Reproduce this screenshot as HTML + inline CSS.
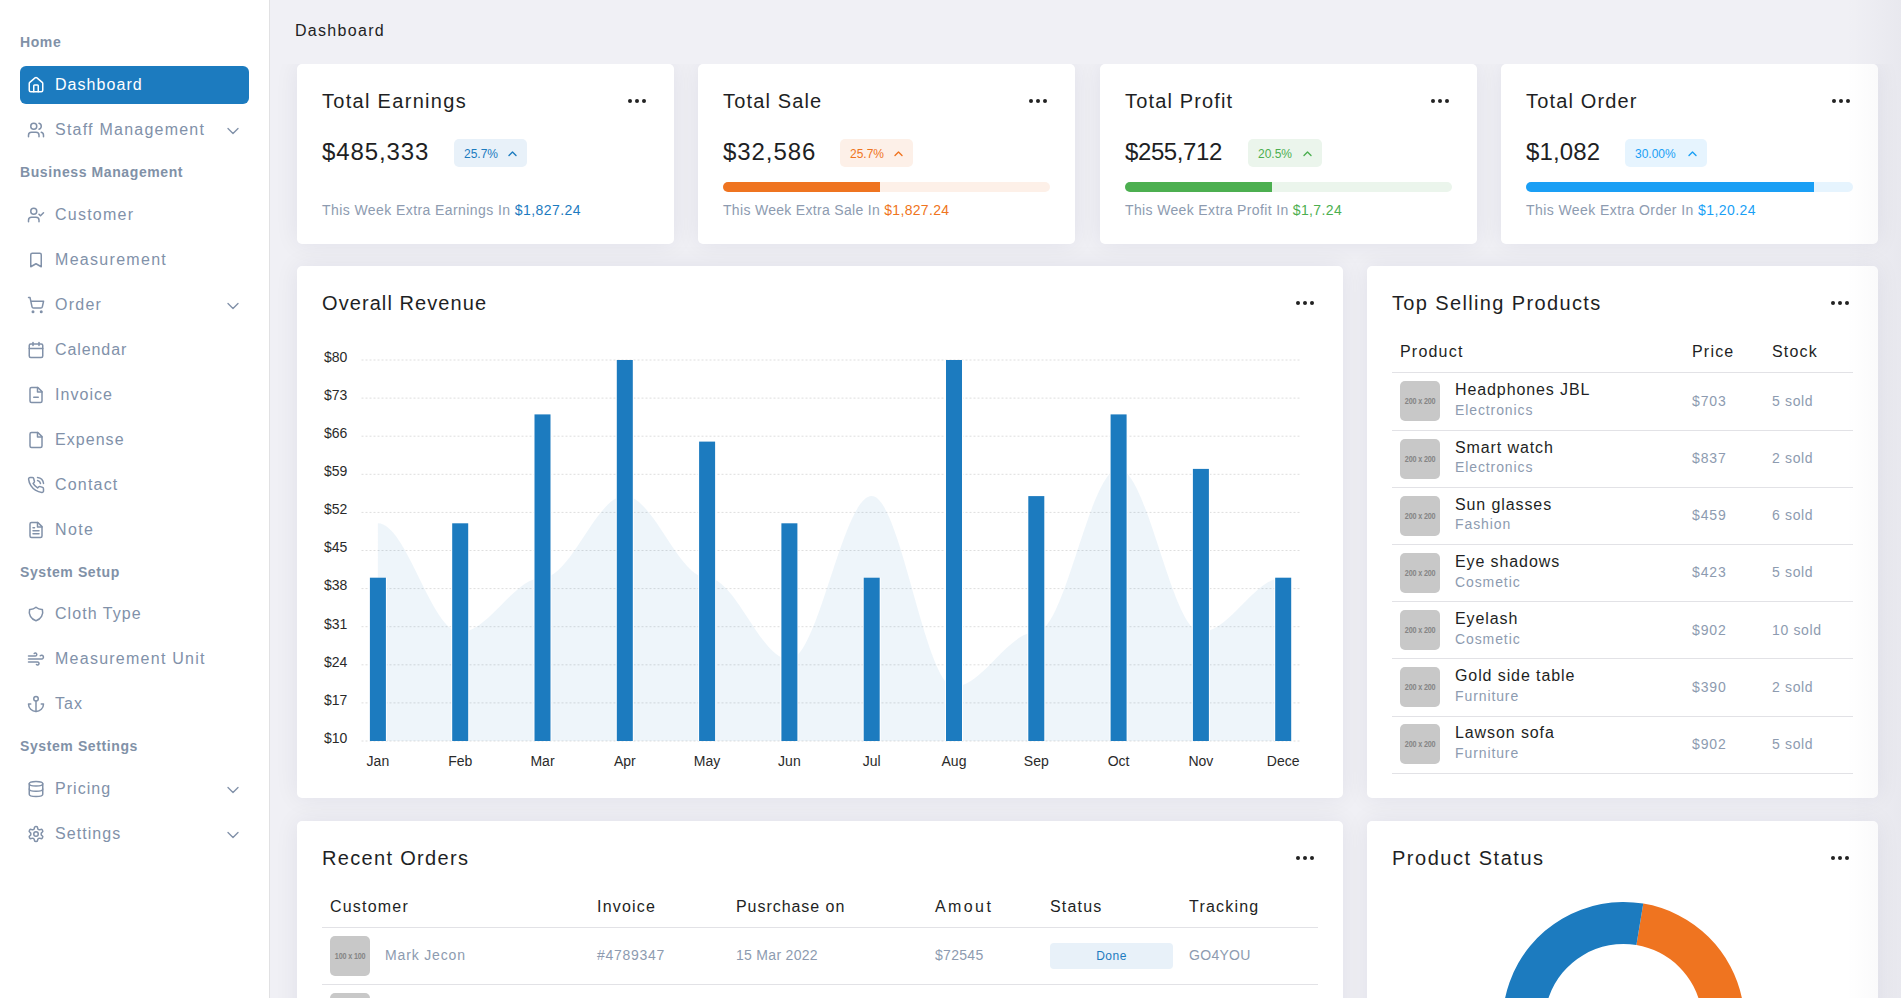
<!DOCTYPE html><html><head><meta charset="utf-8"><title>Dashboard</title><style>
*{box-sizing:border-box;margin:0;padding:0}
html,body{width:1901px;height:998px;overflow:hidden}
body{background:#f0f0f5;font-family:"Liberation Sans", sans-serif;color:#1e1f24;position:relative}
.abs{position:absolute;white-space:nowrap}
.sidebar{position:absolute;left:0;top:0;width:270px;height:998px;background:#fff;border-right:1px solid #e1e1e3}
.sh{position:absolute;left:20px;font-size:14px;font-weight:700;color:#8191a7;line-height:20px;letter-spacing:0.6px}
.si{position:absolute;left:20px;width:229px;height:38px;border-radius:6px;color:#8191a9;font-size:16px;line-height:38px}
.si .ic{position:absolute;left:7px;top:10px;width:18px;height:18px}
.si .tx{position:absolute;left:35px;top:0;letter-spacing:1.05px}
.si .chev{position:absolute;left:203px;top:9.5px;width:20px;height:20px}
.si.active{background:#1c7bbf;color:#fff}
.card{position:absolute;background:#fff;border-radius:5px;box-shadow:0 0 24px rgba(30,30,70,0.07)}
.ct{position:absolute;font-size:20px;line-height:24px;letter-spacing:1.15px;color:#1e1f24}
.dots{position:absolute;width:20px;height:6px}
.dots i{position:absolute;top:1px;width:4.4px;height:4.4px;border-radius:50%;background:#222}
.val{position:absolute;font-size:24px;line-height:30px;letter-spacing:0.6px;color:#1e1f24}
.badge{position:absolute;height:28px;border-radius:5px;font-size:12px;line-height:28px}
.badge span{position:absolute;left:10px;top:1px}
.badge svg{position:absolute;top:11px;width:9px;height:7px}
.prog{position:absolute;height:10px;border-radius:5px;overflow:hidden}
.prog i{position:absolute;left:0;top:0;bottom:0}
.sub{position:absolute;font-size:14px;line-height:20px;letter-spacing:0.42px;color:#8d9bb0}
.th{position:absolute;font-size:16px;line-height:20px;margin-top:1px;letter-spacing:1.2px;color:#1e1f24}
.hr{position:absolute;height:1px;background:#e2e2e6}
.img{position:absolute;width:40px;height:40px;border-radius:5px;background:#c8c8c8;color:#858585;font-size:9px;font-weight:700;line-height:40px;text-align:center;letter-spacing:-0.2px}
.img span{display:inline-block;transform:scaleX(0.8)}
.pn{position:absolute;font-size:16px;line-height:20px;letter-spacing:0.9px;color:#1e1f24}
.pc{position:absolute;font-size:14px;line-height:18px;letter-spacing:0.65px;color:#8d9bb0}
.td{position:absolute;font-size:14px;line-height:20px;letter-spacing:0.3px;color:#8d9bb0}
</style></head><body><div class="sidebar">
<div class="sh" style="top:32px">Home</div>
<div class="sh" style="top:162px">Business Management</div>
<div class="sh" style="top:562px">System Setup</div>
<div class="sh" style="top:736px">System Settings</div>
<div class="si active" style="top:66px"><svg class="ic" viewBox="0 0 24 24" stroke="#ffffff" fill="none" stroke-width="2" stroke-linecap="round" stroke-linejoin="round"><path d="M15 21v-8a1 1 0 0 0-1-1h-4a1 1 0 0 0-1 1v8"/><path d="M3 10a2 2 0 0 1 .709-1.528l7-5.999a2 2 0 0 1 2.582 0l7 5.999A2 2 0 0 1 21 10v9a2 2 0 0 1-2 2H5a2 2 0 0 1-2-2z"/></svg><span class="tx" style="letter-spacing:1.05px">Dashboard</span></div>
<div class="si" style="top:111px"><svg class="ic" viewBox="0 0 24 24" stroke="#8191a9" fill="none" stroke-width="2" stroke-linecap="round" stroke-linejoin="round"><path d="M16 21v-2a4 4 0 0 0-4-4H6a4 4 0 0 0-4 4v2"/><circle cx="9" cy="7" r="4"/><path d="M22 21v-2a4 4 0 0 0-3-3.87"/><path d="M16 3.13a4 4 0 0 1 0 7.75"/></svg><span class="tx" style="letter-spacing:1.23px">Staff Management</span><svg class="chev" viewBox="0 0 24 24" stroke="#8191a9" fill="none" stroke-width="1.6" stroke-linecap="round" stroke-linejoin="round"><path d="m6 9 6 6 6-6"/></svg></div>
<div class="si" style="top:196px"><svg class="ic" viewBox="0 0 24 24" stroke="#8191a9" fill="none" stroke-width="2" stroke-linecap="round" stroke-linejoin="round"><path d="M16 21v-2a4 4 0 0 0-4-4H6a4 4 0 0 0-4 4v2"/><circle cx="9" cy="7" r="4"/><polyline points="16 11 18 13 22 9"/></svg><span class="tx" style="letter-spacing:1.24px">Customer</span></div>
<div class="si" style="top:241px"><svg class="ic" viewBox="0 0 24 24" stroke="#8191a9" fill="none" stroke-width="2" stroke-linecap="round" stroke-linejoin="round"><path d="m19 21-7-4-7 4V5a2 2 0 0 1 2-2h10a2 2 0 0 1 2 2v16z"/></svg><span class="tx" style="letter-spacing:1.30px">Measurement</span></div>
<div class="si" style="top:286px"><svg class="ic" viewBox="0 0 24 24" stroke="#8191a9" fill="none" stroke-width="2" stroke-linecap="round" stroke-linejoin="round"><circle cx="8" cy="21" r="1"/><circle cx="19" cy="21" r="1"/><path d="M2.05 2.05h2l2.66 12.42a2 2 0 0 0 2 1.58h9.78a2 2 0 0 0 1.95-1.57l1.65-7.43H5.12"/></svg><span class="tx" style="letter-spacing:1.25px">Order</span><svg class="chev" viewBox="0 0 24 24" stroke="#8191a9" fill="none" stroke-width="1.6" stroke-linecap="round" stroke-linejoin="round"><path d="m6 9 6 6 6-6"/></svg></div>
<div class="si" style="top:331px"><svg class="ic" viewBox="0 0 24 24" stroke="#8191a9" fill="none" stroke-width="2" stroke-linecap="round" stroke-linejoin="round"><rect width="18" height="18" x="3" y="4" rx="2" ry="2"/><line x1="16" x2="16" y1="2" y2="6"/><line x1="8" x2="8" y1="2" y2="6"/><line x1="3" x2="21" y1="10" y2="10"/></svg><span class="tx" style="letter-spacing:0.91px">Calendar</span></div>
<div class="si" style="top:376px"><svg class="ic" viewBox="0 0 24 24" stroke="#8191a9" fill="none" stroke-width="2" stroke-linecap="round" stroke-linejoin="round"><path d="M14.5 2H6a2 2 0 0 0-2 2v16a2 2 0 0 0 2 2h12a2 2 0 0 0 2-2V7.5L14.5 2z"/><polyline points="14 2 14 8 20 8"/><line x1="9" x2="15" y1="15" y2="15"/></svg><span class="tx" style="letter-spacing:1.05px">Invoice</span></div>
<div class="si" style="top:421px"><svg class="ic" viewBox="0 0 24 24" stroke="#8191a9" fill="none" stroke-width="2" stroke-linecap="round" stroke-linejoin="round"><path d="M14.5 2H6a2 2 0 0 0-2 2v16a2 2 0 0 0 2 2h12a2 2 0 0 0 2-2V7.5L14.5 2z"/><polyline points="14 2 14 8 20 8"/></svg><span class="tx" style="letter-spacing:1.05px">Expense</span></div>
<div class="si" style="top:466px"><svg class="ic" viewBox="0 0 24 24" stroke="#8191a9" fill="none" stroke-width="2" stroke-linecap="round" stroke-linejoin="round"><path d="M22 16.92v3a2 2 0 0 1-2.18 2 19.79 19.79 0 0 1-8.63-3.07 19.5 19.5 0 0 1-6-6 19.79 19.79 0 0 1-3.07-8.67A2 2 0 0 1 4.11 2h3a2 2 0 0 1 2 1.72 12.84 12.84 0 0 0 .7 2.81 2 2 0 0 1-.45 2.11L8.09 9.91a16 16 0 0 0 6 6l1.27-1.27a2 2 0 0 1 2.110-.45 12.84 12.84 0 0 0 2.81.7A2 2 0 0 1 22 16.92z"/><path d="M14.05 2a9 9 0 0 1 8 7.94"/><path d="M14.05 6A5 5 0 0 1 18 10"/></svg><span class="tx" style="letter-spacing:1.19px">Contact</span></div>
<div class="si" style="top:511px"><svg class="ic" viewBox="0 0 24 24" stroke="#8191a9" fill="none" stroke-width="2" stroke-linecap="round" stroke-linejoin="round"><path d="M14.5 2H6a2 2 0 0 0-2 2v16a2 2 0 0 0 2 2h12a2 2 0 0 0 2-2V7.5L14.5 2z"/><polyline points="14 2 14 8 20 8"/><line x1="16" x2="8" y1="13" y2="13"/><line x1="16" x2="8" y1="17" y2="17"/><line x1="10" x2="8" y1="9" y2="9"/></svg><span class="tx" style="letter-spacing:1.35px">Note</span></div>
<div class="si" style="top:595px"><svg class="ic" viewBox="0 0 24 24" stroke="#8191a9" fill="none" stroke-width="2" stroke-linecap="round" stroke-linejoin="round"><path d="M12 3a12 12 0 0 0 8.5 3a12 12 0 0 1-8.5 15a12 12 0 0 1-8.5-15a12 12 0 0 0 8.5-3"/></svg><span class="tx" style="letter-spacing:1.05px">Cloth Type</span></div>
<div class="si" style="top:640px"><svg class="ic" viewBox="0 0 24 24" stroke="#8191a9" fill="none" stroke-width="2" stroke-linecap="round" stroke-linejoin="round"><path d="M17.7 7.7a2.5 2.5 0 1 1 1.8 4.3H2"/><path d="M9.6 4.6A2 2 0 1 1 11 8H2"/><path d="M12.6 19.4A2 2 0 1 0 14 16H2"/></svg><span class="tx" style="letter-spacing:1.25px">Measurement Unit</span></div>
<div class="si" style="top:685px"><svg class="ic" viewBox="0 0 24 24" stroke="#8191a9" fill="none" stroke-width="2" stroke-linecap="round" stroke-linejoin="round"><circle cx="12" cy="5" r="3"/><line x1="12" x2="12" y1="22" y2="8"/><path d="M5 12H2a10 10 0 0 0 20 0h-3"/></svg><span class="tx" style="letter-spacing:1.05px">Tax</span></div>
<div class="si" style="top:770px"><svg class="ic" viewBox="0 0 24 24" stroke="#8191a9" fill="none" stroke-width="2" stroke-linecap="round" stroke-linejoin="round"><ellipse cx="12" cy="5" rx="9" ry="3"/><path d="M21 12c0 1.66-4 3-9 3s-9-1.34-9-3"/><path d="M3 5v14c0 1.66 4 3 9 3s9-1.34 9-3V5"/></svg><span class="tx" style="letter-spacing:1.05px">Pricing</span><svg class="chev" viewBox="0 0 24 24" stroke="#8191a9" fill="none" stroke-width="1.6" stroke-linecap="round" stroke-linejoin="round"><path d="m6 9 6 6 6-6"/></svg></div>
<div class="si" style="top:815px"><svg class="ic" viewBox="0 0 24 24" stroke="#8191a9" fill="none" stroke-width="2" stroke-linecap="round" stroke-linejoin="round"><path d="M12.22 2h-.44a2 2 0 0 0-2 2v.18a2 2 0 0 1-1 1.73l-.43.25a2 2 0 0 1-2 0l-.15-.08a2 2 0 0 0-2.73.73l-.22.38a2 2 0 0 0 .73 2.730l.15.1a2 2 0 0 1 1 1.72v.51a2 2 0 0 1-1 1.74l-.15.09a2 2 0 0 0-.73 2.73l.22.38a2 2 0 0 0 2.73.73l.15-.08a2 2 0 0 1 2 0l.43.25a2 2 0 0 1 1 1.73V20a2 2 0 0 0 2 2h.44a2 2 0 0 0 2-2v-.18a2 2 0 0 1 1-1.73l.43-.25a2 2 0 0 1 2 0l.15.08a2 2 0 0 0 2.73-.73l.22-.39a2 2 0 0 0-.73-2.73l-.15-.08a2 2 0 0 1-1-1.740v-.5a2 2 0 0 1 1-1.74l.15-.09a2 2 0 0 0 .73-2.73l-.22-.38a2 2 0 0 0-2.73-.73l-.15.08a2 2 0 0 1-2 0l-.43-.25a2 2 0 0 1-1-1.73V4a2 2 0 0 0-2-2z"/><circle cx="12" cy="12" r="3"/></svg><span class="tx" style="letter-spacing:1.05px">Settings</span><svg class="chev" viewBox="0 0 24 24" stroke="#8191a9" fill="none" stroke-width="1.6" stroke-linecap="round" stroke-linejoin="round"><path d="m6 9 6 6 6-6"/></svg></div>
</div>
<div class="abs" style="left:295px;top:21px;font-size:16px;line-height:20px;letter-spacing:1.3px;color:#1e1f24">Dashboard</div>
<div style="position:absolute;left:270px;top:64px;width:1631px;height:934px;overflow:hidden"><div style="position:absolute;left:-270px;top:-64px;width:1901px;height:998px">
<div class="card" style="left:297px;top:64px;width:377px;height:180px">
<div class="ct" style="left:25px;top:25px;letter-spacing:1.3px">Total Earnings</div>
<div class="dots" style="left:331px;top:34px"><i style="left:0"></i><i style="left:7px"></i><i style="left:14px"></i></div>
<div class="val" style="left:25px;top:73px;letter-spacing:0.88px">$485,333</div>
<div class="badge" style="left:157px;top:75px;width:73px;background:#e8f1f9;color:#1c7bbf"><span>25.7%</span><svg style="left:54px" viewBox="0 0 9 6" fill="none" stroke="#1c7bbf" stroke-width="1.4" stroke-linecap="round" stroke-linejoin="round"><path d="M1 5 4.5 1.5 8 5"/></svg></div>
<div class="sub" style="left:25px;top:136px;letter-spacing:0.42px">This Week Extra Earnings In <span style="color:#1c7bbf">$1,827.24</span></div>
</div>
<div class="card" style="left:698px;top:64px;width:377px;height:180px">
<div class="ct" style="left:25px;top:25px;letter-spacing:1.15px">Total Sale</div>
<div class="dots" style="left:331px;top:34px"><i style="left:0"></i><i style="left:7px"></i><i style="left:14px"></i></div>
<div class="val" style="left:25px;top:73px;letter-spacing:0.93px">$32,586</div>
<div class="badge" style="left:142px;top:75px;width:73px;background:#fdf0e8;color:#ef7420"><span>25.7%</span><svg style="left:54px" viewBox="0 0 9 6" fill="none" stroke="#ef7420" stroke-width="1.4" stroke-linecap="round" stroke-linejoin="round"><path d="M1 5 4.5 1.5 8 5"/></svg></div>
<div class="prog" style="left:25px;top:118px;width:327px;background:#fdf0e8"><i style="width:157px;background:#ef7420"></i></div>
<div class="sub" style="left:25px;top:136px;letter-spacing:0.31px">This Week Extra Sale In <span style="color:#ef7420">$1,827.24</span></div>
</div>
<div class="card" style="left:1100px;top:64px;width:377px;height:180px">
<div class="ct" style="left:25px;top:25px;letter-spacing:1.15px">Total Profit</div>
<div class="dots" style="left:331px;top:34px"><i style="left:0"></i><i style="left:7px"></i><i style="left:14px"></i></div>
<div class="val" style="left:25px;top:73px;letter-spacing:-0.4px">$255,712</div>
<div class="badge" style="left:148px;top:75px;width:74px;background:#ebf5ec;color:#4caf50"><span>20.5%</span><svg style="left:55px" viewBox="0 0 9 6" fill="none" stroke="#4caf50" stroke-width="1.4" stroke-linecap="round" stroke-linejoin="round"><path d="M1 5 4.5 1.5 8 5"/></svg></div>
<div class="prog" style="left:25px;top:118px;width:327px;background:#ebf5ec"><i style="width:147px;background:#4caf50"></i></div>
<div class="sub" style="left:25px;top:136px;letter-spacing:0.36px">This Week Extra Profit In <span style="color:#4caf50">$1,7.24</span></div>
</div>
<div class="card" style="left:1501px;top:64px;width:377px;height:180px">
<div class="ct" style="left:25px;top:25px;letter-spacing:1.15px">Total Order</div>
<div class="dots" style="left:331px;top:34px"><i style="left:0"></i><i style="left:7px"></i><i style="left:14px"></i></div>
<div class="val" style="left:25px;top:73px;letter-spacing:0.16px">$1,082</div>
<div class="badge" style="left:124px;top:75px;width:82px;background:#e6f4fe;color:#1a9ff5"><span>30.00%</span><svg style="left:63px" viewBox="0 0 9 6" fill="none" stroke="#1a9ff5" stroke-width="1.4" stroke-linecap="round" stroke-linejoin="round"><path d="M1 5 4.5 1.5 8 5"/></svg></div>
<div class="prog" style="left:25px;top:118px;width:327px;background:#e6f4fe"><i style="width:288px;background:#1a9ff5"></i></div>
<div class="sub" style="left:25px;top:136px;letter-spacing:0.42px">This Week Extra Order In <span style="color:#1a9ff5">$1,20.24</span></div>
</div>
<div class="card" style="left:297px;top:266px;width:1046px;height:532px">
<div class="ct" style="left:25px;top:25px;letter-spacing:1.08px">Overall Revenue</div>
<div class="dots" style="left:999px;top:34px"><i style="left:0"></i><i style="left:7px"></i><i style="left:14px"></i></div>
</div>
<div class="card" style="left:1367px;top:266px;width:511px;height:532px">
<div class="ct" style="left:25px;top:25px;letter-spacing:1.36px">Top Selling Products</div>
<div class="dots" style="left:464px;top:34px"><i style="left:0"></i><i style="left:7px"></i><i style="left:14px"></i></div>
<div class="th" style="left:33px;top:75px">Product</div>
<div class="th" style="left:325px;top:75px">Price</div>
<div class="th" style="left:405px;top:75px">Stock</div>
<div class="hr" style="left:25px;top:106px;width:461px"></div>
<div class="img" style="left:33px;top:115.3px"><span>200 x 200</span></div>
<div class="pn" style="left:88px;top:114.3px">Headphones JBL</div>
<div class="pc" style="left:88px;top:135.0px;letter-spacing:0.9px">Electronics</div>
<div class="td" style="left:325px;top:124.8px;letter-spacing:0.9px">$703</div>
<div class="td" style="left:405px;top:124.8px;letter-spacing:0.65px">5 sold</div>
<div class="hr" style="left:25px;top:163.7px;width:461px"></div>
<div class="img" style="left:33px;top:172.5px"><span>200 x 200</span></div>
<div class="pn" style="left:88px;top:171.5px">Smart watch</div>
<div class="pc" style="left:88px;top:192.2px;letter-spacing:0.9px">Electronics</div>
<div class="td" style="left:325px;top:182.0px;letter-spacing:0.9px">$837</div>
<div class="td" style="left:405px;top:182.0px;letter-spacing:0.65px">2 sold</div>
<div class="hr" style="left:25px;top:220.9px;width:461px"></div>
<div class="img" style="left:33px;top:229.6px"><span>200 x 200</span></div>
<div class="pn" style="left:88px;top:228.6px">Sun glasses</div>
<div class="pc" style="left:88px;top:249.3px;letter-spacing:0.9px">Fashion</div>
<div class="td" style="left:325px;top:239.1px;letter-spacing:0.9px">$459</div>
<div class="td" style="left:405px;top:239.1px;letter-spacing:0.65px">6 sold</div>
<div class="hr" style="left:25px;top:278.0px;width:461px"></div>
<div class="img" style="left:33px;top:286.8px"><span>200 x 200</span></div>
<div class="pn" style="left:88px;top:285.8px">Eye shadows</div>
<div class="pc" style="left:88px;top:306.5px;letter-spacing:0.9px">Cosmetic</div>
<div class="td" style="left:325px;top:296.3px;letter-spacing:0.9px">$423</div>
<div class="td" style="left:405px;top:296.3px;letter-spacing:0.65px">5 sold</div>
<div class="hr" style="left:25px;top:335.2px;width:461px"></div>
<div class="img" style="left:33px;top:344.0px"><span>200 x 200</span></div>
<div class="pn" style="left:88px;top:343.0px">Eyelash</div>
<div class="pc" style="left:88px;top:363.7px;letter-spacing:0.9px">Cosmetic</div>
<div class="td" style="left:325px;top:353.5px;letter-spacing:0.9px">$902</div>
<div class="td" style="left:405px;top:353.5px;letter-spacing:0.65px">10 sold</div>
<div class="hr" style="left:25px;top:392.4px;width:461px"></div>
<div class="img" style="left:33px;top:401.2px"><span>200 x 200</span></div>
<div class="pn" style="left:88px;top:400.2px">Gold side table</div>
<div class="pc" style="left:88px;top:420.9px;letter-spacing:0.9px">Furniture</div>
<div class="td" style="left:325px;top:410.7px;letter-spacing:0.9px">$390</div>
<div class="td" style="left:405px;top:410.7px;letter-spacing:0.65px">2 sold</div>
<div class="hr" style="left:25px;top:449.6px;width:461px"></div>
<div class="img" style="left:33px;top:458.3px"><span>200 x 200</span></div>
<div class="pn" style="left:88px;top:457.3px">Lawson sofa</div>
<div class="pc" style="left:88px;top:478.0px;letter-spacing:0.9px">Furniture</div>
<div class="td" style="left:325px;top:467.8px;letter-spacing:0.9px">$902</div>
<div class="td" style="left:405px;top:467.8px;letter-spacing:0.65px">5 sold</div>
<div class="hr" style="left:25px;top:506.7px;width:461px"></div>
</div>
<div class="card" style="left:297px;top:821px;width:1046px;height:300px">
<div class="ct" style="left:25px;top:25px;letter-spacing:1.32px">Recent Orders</div>
<div class="dots" style="left:999px;top:34px"><i style="left:0"></i><i style="left:7px"></i><i style="left:14px"></i></div>
<div class="th" style="left:33px;top:75px;letter-spacing:1.2px">Customer</div>
<div class="th" style="left:300px;top:75px;letter-spacing:1.2px">Invoice</div>
<div class="th" style="left:439px;top:75px;letter-spacing:0.95px">Pusrchase on</div>
<div class="th" style="left:638px;top:75px;letter-spacing:2.4px">Amout</div>
<div class="th" style="left:753px;top:75px;letter-spacing:1.2px">Status</div>
<div class="th" style="left:892px;top:75px;letter-spacing:1.2px">Tracking</div>
<div class="hr" style="left:25px;top:106px;width:996px"></div>
<div class="img" style="left:33px;top:115px"><span>100 x 100</span></div>
<div class="td" style="left:88px;top:124px;letter-spacing:0.85px">Mark Jecon</div>
<div class="td" style="left:300px;top:124px;letter-spacing:0.73px">#4789347</div>
<div class="td" style="left:439px;top:124px">15 Mar 2022</div>
<div class="td" style="left:638px;top:124px">$72545</div>
<div class="abs" style="left:753px;top:122px;width:123px;height:26px;border-radius:4px;background:#e8f1f9;color:#1c7bbf;font-size:12px;line-height:26px;text-align:center;letter-spacing:0.5px">Done</div>
<div class="td" style="left:892px;top:124px">GO4YOU</div>
<div class="hr" style="left:25px;top:163px;width:996px"></div>
<div class="img" style="left:33px;top:172px"><span>100 x 100</span></div>
</div>
<div class="card" style="left:1367px;top:821px;width:511px;height:300px">
<div class="ct" style="left:25px;top:25px;letter-spacing:1.53px">Product Status</div>
<div class="dots" style="left:464px;top:34px"><i style="left:0"></i><i style="left:7px"></i><i style="left:14px"></i></div>
</div>
<svg class="abs" style="left:0;top:0" width="1901" height="998" viewBox="0 0 1901 998" font-family='"Liberation Sans", sans-serif'><line x1="361.5" x2="1300" y1="360.0" y2="360.0" stroke="#dedede" stroke-width="1" stroke-dasharray="2 2"/><text x="324" y="361.8" font-size="14" fill="#2a2a2a">$80</text><line x1="361.5" x2="1300" y1="398.1" y2="398.1" stroke="#dedede" stroke-width="1" stroke-dasharray="2 2"/><text x="324" y="399.9" font-size="14" fill="#2a2a2a">$73</text><line x1="361.5" x2="1300" y1="436.2" y2="436.2" stroke="#dedede" stroke-width="1" stroke-dasharray="2 2"/><text x="324" y="438.0" font-size="14" fill="#2a2a2a">$66</text><line x1="361.5" x2="1300" y1="474.3" y2="474.3" stroke="#dedede" stroke-width="1" stroke-dasharray="2 2"/><text x="324" y="476.1" font-size="14" fill="#2a2a2a">$59</text><line x1="361.5" x2="1300" y1="512.4" y2="512.4" stroke="#dedede" stroke-width="1" stroke-dasharray="2 2"/><text x="324" y="514.2" font-size="14" fill="#2a2a2a">$52</text><line x1="361.5" x2="1300" y1="550.5" y2="550.5" stroke="#dedede" stroke-width="1" stroke-dasharray="2 2"/><text x="324" y="552.3" font-size="14" fill="#2a2a2a">$45</text><line x1="361.5" x2="1300" y1="588.6" y2="588.6" stroke="#dedede" stroke-width="1" stroke-dasharray="2 2"/><text x="324" y="590.4" font-size="14" fill="#2a2a2a">$38</text><line x1="361.5" x2="1300" y1="626.7" y2="626.7" stroke="#dedede" stroke-width="1" stroke-dasharray="2 2"/><text x="324" y="628.5" font-size="14" fill="#2a2a2a">$31</text><line x1="361.5" x2="1300" y1="664.8" y2="664.8" stroke="#dedede" stroke-width="1" stroke-dasharray="2 2"/><text x="324" y="666.6" font-size="14" fill="#2a2a2a">$24</text><line x1="361.5" x2="1300" y1="702.9" y2="702.9" stroke="#dedede" stroke-width="1" stroke-dasharray="2 2"/><text x="324" y="704.7" font-size="14" fill="#2a2a2a">$17</text><line x1="361.5" x2="1300" y1="741.0" y2="741.0" stroke="#dedede" stroke-width="1" stroke-dasharray="2 2"/><text x="324" y="742.8" font-size="14" fill="#2a2a2a">$10</text><path d="M377.9,741.0 L377.9,523.3 C406.7,523.3 431.4,632.1 460.2,632.1 C489.0,632.1 513.7,577.7 542.5,577.7 C571.3,577.7 596.0,496.1 624.8,496.1 C653.6,496.1 678.3,577.7 707.1,577.7 C735.9,577.7 760.6,659.4 789.4,659.4 C818.2,659.4 842.9,496.1 871.7,496.1 C900.5,496.1 925.2,686.6 954.0,686.6 C982.8,686.6 1007.5,632.1 1036.3,632.1 C1065.1,632.1 1089.8,468.9 1118.6,468.9 C1147.4,468.9 1172.1,632.1 1200.9,632.1 C1229.7,632.1 1254.4,577.7 1283.2,577.7 L1283.2,741.0 Z" fill="#1c7bbf" fill-opacity="0.075"/><rect x="368.9" y="577.7" width="18" height="163.3" fill="#ffffff"/><rect x="369.9" y="577.7" width="16" height="163.3" fill="#1c7bbf"/><rect x="451.2" y="523.3" width="18" height="217.7" fill="#ffffff"/><rect x="452.2" y="523.3" width="16" height="217.7" fill="#1c7bbf"/><rect x="533.5" y="414.4" width="18" height="326.6" fill="#ffffff"/><rect x="534.5" y="414.4" width="16" height="326.6" fill="#1c7bbf"/><rect x="615.8" y="360.0" width="18" height="381.0" fill="#ffffff"/><rect x="616.8" y="360.0" width="16" height="381.0" fill="#1c7bbf"/><rect x="698.1" y="441.6" width="18" height="299.4" fill="#ffffff"/><rect x="699.1" y="441.6" width="16" height="299.4" fill="#1c7bbf"/><rect x="780.4" y="523.3" width="18" height="217.7" fill="#ffffff"/><rect x="781.4" y="523.3" width="16" height="217.7" fill="#1c7bbf"/><rect x="862.7" y="577.7" width="18" height="163.3" fill="#ffffff"/><rect x="863.7" y="577.7" width="16" height="163.3" fill="#1c7bbf"/><rect x="945.0" y="360.0" width="18" height="381.0" fill="#ffffff"/><rect x="946.0" y="360.0" width="16" height="381.0" fill="#1c7bbf"/><rect x="1027.3" y="496.1" width="18" height="244.9" fill="#ffffff"/><rect x="1028.3" y="496.1" width="16" height="244.9" fill="#1c7bbf"/><rect x="1109.6" y="414.4" width="18" height="326.6" fill="#ffffff"/><rect x="1110.6" y="414.4" width="16" height="326.6" fill="#1c7bbf"/><rect x="1191.9" y="468.9" width="18" height="272.1" fill="#ffffff"/><rect x="1192.9" y="468.9" width="16" height="272.1" fill="#1c7bbf"/><rect x="1274.2" y="577.7" width="18" height="163.3" fill="#ffffff"/><rect x="1275.2" y="577.7" width="16" height="163.3" fill="#1c7bbf"/><text x="377.9" y="765.8" font-size="14" fill="#2a2a2a" text-anchor="middle">Jan</text><text x="460.2" y="765.8" font-size="14" fill="#2a2a2a" text-anchor="middle">Feb</text><text x="542.5" y="765.8" font-size="14" fill="#2a2a2a" text-anchor="middle">Mar</text><text x="624.8" y="765.8" font-size="14" fill="#2a2a2a" text-anchor="middle">Apr</text><text x="707.1" y="765.8" font-size="14" fill="#2a2a2a" text-anchor="middle">May</text><text x="789.4" y="765.8" font-size="14" fill="#2a2a2a" text-anchor="middle">Jun</text><text x="871.7" y="765.8" font-size="14" fill="#2a2a2a" text-anchor="middle">Jul</text><text x="954.0" y="765.8" font-size="14" fill="#2a2a2a" text-anchor="middle">Aug</text><text x="1036.3" y="765.8" font-size="14" fill="#2a2a2a" text-anchor="middle">Sep</text><text x="1118.6" y="765.8" font-size="14" fill="#2a2a2a" text-anchor="middle">Oct</text><text x="1200.9" y="765.8" font-size="14" fill="#2a2a2a" text-anchor="middle">Nov</text><text x="1283.2" y="765.8" font-size="14" fill="#2a2a2a" text-anchor="middle">Dece</text><path d="M1643.26,903.62 A121.0,121.0 0 0 1 1684.00,1127.79 L1663.00,1091.42 A79.0,79.0 0 0 0 1636.40,945.06 Z" fill="#ef7420"/><path d="M1563.00,1127.79 A121.0,121.0 0 0 1 1643.26,903.62 L1636.40,945.06 A79.0,79.0 0 0 0 1584.00,1091.42 Z" fill="#1c7bbf"/></svg>
</div></div>
<div class="abs" style="left:1846px;top:0;width:55px;height:998px;background:linear-gradient(to right,rgba(20,20,60,0),rgba(20,20,60,0.035))"></div></body></html>
